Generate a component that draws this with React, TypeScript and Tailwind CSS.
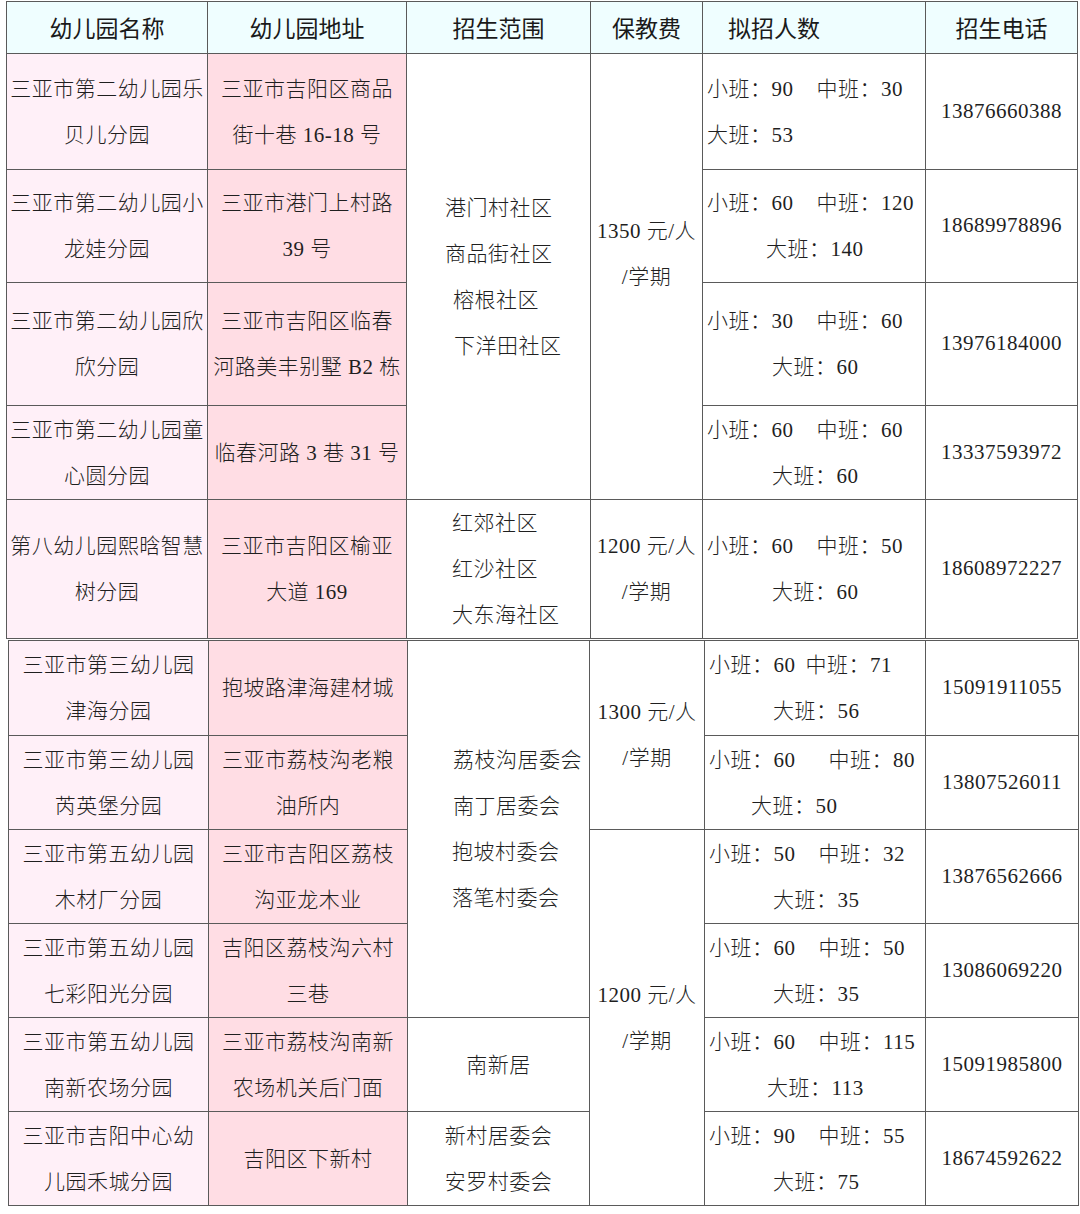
import React from 'react'

type Quota = {
  small: string
  mid: string
  gap: string
  big: string
  bigPad: string
}

type Row = {
  h: string
  name: string[]
  addr: string[]
  quota: Quota
  phone: string
}

const body = "font-['Liberation_Serif','Noto_Sans_CJK_SC',serif] text-[21px] tracking-[0.5px] font-light text-[#1f1f1f]"
const cell = 'border border-[#5a5a5a] p-0 align-middle'

const head = ['幼儿园名称', '幼儿园地址', '招生范围', '保教费', '拟招人数', '招生电话']

const firstRows: Row[] = [
  {
    h: 'h-[116px]',
    name: ['三亚市第二幼儿园乐', '贝儿分园'],
    addr: ['三亚市吉阳区商品', '街十巷 16-18 号'],
    quota: { small: '小班：90', mid: '中班：30', gap: 'ml-[23px]', big: '大班：53', bigPad: 'pl-[4px]' },
    phone: '13876660388'
  },
  {
    h: 'h-[113px]',
    name: ['三亚市第二幼儿园小', '龙娃分园'],
    addr: ['三亚市港门上村路', '39 号'],
    quota: { small: '小班：60', mid: '中班：120', gap: 'ml-[23px]', big: '大班：140', bigPad: 'pl-[63px]' },
    phone: '18689978896'
  },
  {
    h: 'h-[123px]',
    name: ['三亚市第二幼儿园欣', '欣分园'],
    addr: ['三亚市吉阳区临春', '河路美丰别墅 B2 栋'],
    quota: { small: '小班：30', mid: '中班：60', gap: 'ml-[23px]', big: '大班：60', bigPad: 'pl-[69px]' },
    phone: '13976184000'
  },
  {
    h: 'h-[94px]',
    name: ['三亚市第二幼儿园童', '心圆分园'],
    addr: ['临春河路 3 巷 31 号'],
    quota: { small: '小班：60', mid: '中班：60', gap: 'ml-[23px]', big: '大班：60', bigPad: 'pl-[69px]' },
    phone: '13337593972'
  },
  {
    h: 'h-[139px]',
    name: ['第八幼儿园熙晗智慧', '树分园'],
    addr: ['三亚市吉阳区榆亚', '大道 169'],
    quota: { small: '小班：60', mid: '中班：50', gap: 'ml-[23px]', big: '大班：60', bigPad: 'pl-[69px]' },
    phone: '18608972227'
  }
]

const secondRows: Row[] = [
  {
    h: 'h-[95px]',
    name: ['三亚市第三幼儿园', '津海分园'],
    addr: ['抱坡路津海建材城'],
    quota: { small: '小班：60', mid: '中班：71', gap: 'ml-[10px]', big: '大班：56', bigPad: 'pl-[68px]' },
    phone: '15091911055'
  },
  {
    h: 'h-[94px]',
    name: ['三亚市第三幼儿园', '芮英堡分园'],
    addr: ['三亚市荔枝沟老粮', '油所内'],
    quota: { small: '小班：60', mid: '中班：80', gap: 'ml-[33px]', big: '大班：50', bigPad: 'pl-[46px]' },
    phone: '13807526011'
  },
  {
    h: 'h-[94px]',
    name: ['三亚市第五幼儿园', '木材厂分园'],
    addr: ['三亚市吉阳区荔枝', '沟亚龙木业'],
    quota: { small: '小班：50', mid: '中班：32', gap: 'ml-[23px]', big: '大班：35', bigPad: 'pl-[68px]' },
    phone: '13876562666'
  },
  {
    h: 'h-[94px]',
    name: ['三亚市第五幼儿园', '七彩阳光分园'],
    addr: ['吉阳区荔枝沟六村', '三巷'],
    quota: { small: '小班：60', mid: '中班：50', gap: 'ml-[23px]', big: '大班：35', bigPad: 'pl-[68px]' },
    phone: '13086069220'
  },
  {
    h: 'h-[94px]',
    name: ['三亚市第五幼儿园', '南新农场分园'],
    addr: ['三亚市荔枝沟南新', '农场机关后门面'],
    quota: { small: '小班：60', mid: '中班：115', gap: 'ml-[23px]', big: '大班：113', bigPad: 'pl-[62px]' },
    phone: '15091985800'
  },
  {
    h: 'h-[94px]',
    name: ['三亚市吉阳中心幼', '儿园禾城分园'],
    addr: ['吉阳区下新村'],
    quota: { small: '小班：90', mid: '中班：55', gap: 'ml-[23px]', big: '大班：75', bigPad: 'pl-[68px]' },
    phone: '18674592622'
  }
]

function Lines({ lines, className = '' }: { lines: string[]; className?: string }) {
  return (
    <div className={className}>
      {lines.map((l, i) => (
        <div key={i} className="leading-[46px] whitespace-nowrap">
          {l}
        </div>
      ))}
    </div>
  )
}

function LeftLines({ lines }: { lines: [string, string][] }) {
  return (
    <div>
      {lines.map(([t, pad], i) => (
        <div key={i} className={`leading-[46px] whitespace-nowrap ${pad}`}>
          {t}
        </div>
      ))}
    </div>
  )
}

function QuotaCell({ q }: { q: Quota }) {
  return (
    <td className={`${cell} text-left`}>
      <div className="leading-[46px] whitespace-nowrap pl-[4px]">
        {q.small}
        <span className={q.gap}>{q.mid}</span>
      </div>
      <div className={`leading-[46px] whitespace-nowrap ${q.bigPad}`}>{q.big}</div>
    </td>
  )
}

function BaseCells({ r }: { r: Row }) {
  return (
    <>
      <td className={`${cell} bg-[#fff0f8] text-center`}>
        <Lines lines={r.name} />
      </td>
      <td className={`${cell} bg-[#ffdde4] text-center`}>
        <Lines lines={r.addr} />
      </td>
    </>
  )
}

function Fee({ amount, className = '' }: { amount: string; className?: string }) {
  return <Lines lines={[`${amount} 元/人`, '/学期']} className={`text-center ${className}`} />
}

export default function App() {
  return (
    <div className={`bg-white w-[1080px] h-[1214px] pt-[1px] ${body}`}>
      <table className="table-fixed border-collapse ml-[6px] w-[1071px] border border-[#444]">
        <colgroup>
          <col className="w-[201px]" />
          <col className="w-[199px]" />
          <col className="w-[184px]" />
          <col className="w-[112px]" />
          <col className="w-[223px]" />
          <col className="w-[152px]" />
        </colgroup>
        <tbody>
          <tr className="h-[52px] bg-[#effeff] font-['Noto_Sans_CJK_SC',sans-serif] text-[23px] font-normal tracking-normal text-[#1a1a1a]">
            {head.map((h, i) => (
              <td key={h} className={`${cell} ${i === 4 ? 'text-left pl-[25px]' : 'text-center'}`}>
                {h}
              </td>
            ))}
          </tr>
          {firstRows.map((r, i) => (
            <tr key={i} className={r.h}>
              <BaseCells r={r} />
              {i === 0 && (
                <td rowSpan={4} className={`${cell} text-left`}>
                  <LeftLines
                    lines={[
                      ['港门村社区', 'pl-[38px]'],
                      ['商品街社区', 'pl-[38px]'],
                      ['榕根社区', 'pl-[46px]'],
                      ['下洋田社区', 'pl-[47px]']
                    ]}
                  />
                </td>
              )}
              {i === 0 && (
                <td rowSpan={4} className={cell}>
                  <Fee amount="1350" className="pb-[46px]" />
                </td>
              )}
              {i === 4 && (
                <>
                  <td className={`${cell} text-left`}>
                    <LeftLines
                      lines={[
                        ['红郊社区', 'pl-[45px]'],
                        ['红沙社区', 'pl-[45px]'],
                        ['大东海社区', 'pl-[45px]']
                      ]}
                    />
                  </td>
                  <td className={cell}>
                    <Fee amount="1200" />
                  </td>
                </>
              )}
              <QuotaCell q={r.quota} />
              <td className={`${cell} text-center`}>{r.phone}</td>
            </tr>
          ))}
        </tbody>
      </table>

      <table className="table-fixed border-collapse ml-[8px] mt-[1px] w-[1070px] border border-[#444]">
        <colgroup>
          <col className="w-[200px]" />
          <col className="w-[199px]" />
          <col className="w-[182px]" />
          <col className="w-[115px]" />
          <col className="w-[221px]" />
          <col className="w-[153px]" />
        </colgroup>
        <tbody>
          {secondRows.map((r, i) => (
            <tr key={i} className={r.h}>
              <BaseCells r={r} />
              {i === 0 && (
                <td rowSpan={4} className={`${cell} text-left`}>
                  <LeftLines
                    lines={[
                      ['荔枝沟居委会', 'pl-[45px]'],
                      ['南丁居委会', 'pl-[45px]'],
                      ['抱坡村委会', 'pl-[44px]'],
                      ['落笔村委会', 'pl-[44px]']
                    ]}
                  />
                </td>
              )}
              {i === 4 && (
                <td className={`${cell} text-center`}>
                  <Lines lines={['南新居']} />
                </td>
              )}
              {i === 5 && (
                <td className={`${cell} text-center`}>
                  <Lines lines={['新村居委会', '安罗村委会']} />
                </td>
              )}
              {i === 0 && (
                <td rowSpan={2} className={cell}>
                  <Fee amount="1300" />
                </td>
              )}
              {i === 2 && (
                <td rowSpan={4} className={cell}>
                  <Fee amount="1200" />
                </td>
              )}
              <QuotaCell q={r.quota} />
              <td className={`${cell} text-center`}>{r.phone}</td>
            </tr>
          ))}
        </tbody>
      </table>
    </div>
  )
}
